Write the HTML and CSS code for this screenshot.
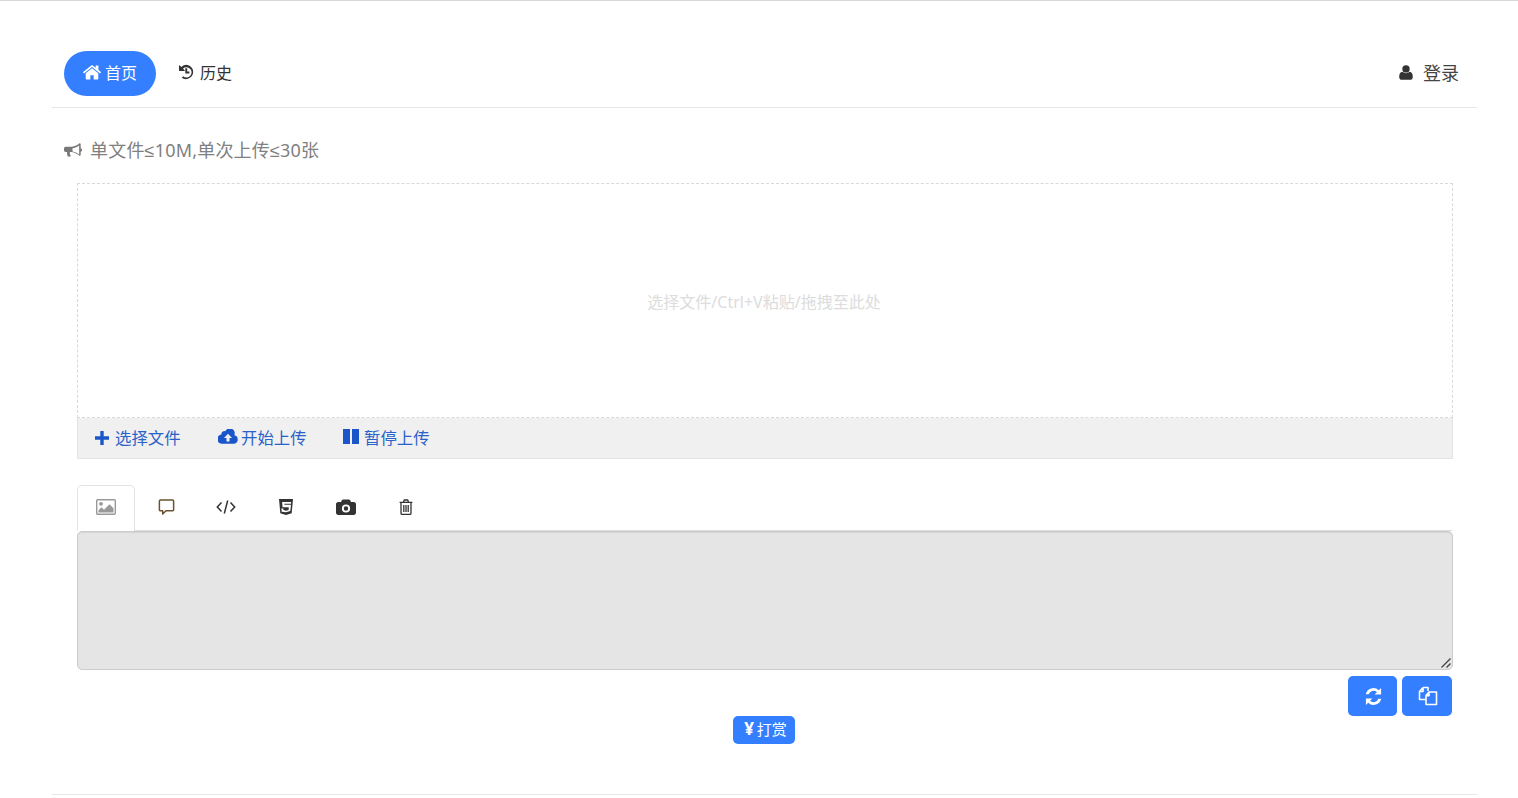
FILE: index.html
```html
<!DOCTYPE html>
<html lang="zh-CN">
<head>
<meta charset="utf-8">
<title>图床</title>
<link rel="stylesheet" href="styles.css">
</head>
<body>
<div class="page">
  <nav class="nav">
    <a class="pill active">
      <svg class="ic-home" viewBox="0 0 24 20"><path d="M12 4.200 3.600 11.100V18.300c0 .5.400.9.900.9h5.300v-5.600h4.400v5.600h5.300c.5 0 .9-.4.9-.9v-7.200zM23.800 9.400 20.600 6.700V1.200c0-.3-.2-.5-.5-.5h-2.700c-.3 0-.5.200-.5.500v2.600L13.400.9c-.8-.7-2-.7-2.800 0L.2 9.400c-.2.200-.3.500-.1.700l.9 1c.2.200.5.200.7 0L12 2.500l10.300 8.600c.2.200.5.200.7 0l.9-1c.2-.2.100-.5-.1-.7z" fill="#fff"/></svg>
      <span>首页</span>
    </a>
    <a class="pill">
      <svg class="ic-hist" viewBox="0 0 16 16"><path d="M8.500.8A7.200 7.200 0 0 0 3.400 2.900L1.800 1.400a.5.5 0 0 0-.8.300V6.500c0 .3.200.5.500.5H6.300a.5.5 0 0 0 .3-.8L5 4.600a5.100 5.100 0 1 1 .2 7.600l-1.500 1.600A7.200 7.200 0 1 0 8.500.8zM7.300 4.300v5.100h4.100V7.600H9.200V4.300z" fill="#333"/></svg>
      <span>历史</span>
    </a>
    <a class="login">
      <svg class="ic-user" viewBox="0 0 14 15"><path d="M7 .2a3.700 3.700 0 1 1 0 7.400A3.700 3.700 0 0 1 7 .2zM3.300 6.800C4.300 7.700 5.600 8.200 7 8.200s2.700-.5 3.700-1.400c2 .3 3.100 2 3.100 5.100 0 1.500-1 2.900-2.400 2.900H2.600C1.200 14.800.2 13.400.2 11.900c0-3.100 1.100-4.800 3.100-5.100z" fill="#333"/></svg>
      <span>登录</span>
    </a>
  </nav>

  <p class="notice">
    <svg class="ic-horn" viewBox="0 0 19 16"><path d="M16.400.8c.7 0 1.200.5 1.200 1.200v4.100c.8.200 1.400.9 1.400 1.900s-.6 1.700-1.400 1.900v3c0 .7-.5 1.200-1.200 1.200-2-1.700-5-3.700-8.300-4H6.300c-.4 1-.3 1.900.1 2.800.3.600.8 1.100 1 1.900H3.900C3.500 13.200 2.900 10.800 3.300 10H1.700C.8 10 0 9.200 0 8.300V6.300C0 5.300.8 4.500 1.700 4.500h6.600c3.100-.2 6.100-2 8.100-3.700zM16 3.200c-1.900 1.400-4.500 2.700-7 3v3.400c2.500.3 5.100 1.600 7 3.100z" fill="#777"/></svg>
    <span>单文件≤10M,单次上传≤30张</span>
  </p>

  <section class="uploader">
    <div class="drop">选择文件/Ctrl+V粘贴/拖拽至此处</div>
    <div class="tools">
      <a class="tool t1">
        <svg class="ic-plus" viewBox="0 0 14 14"><path d="M5.300 0h3.400v5.300H14v3.400H8.700V14H5.300V8.700H0V5.300h5.300z" fill="#1a56c9"/></svg>
        <span>选择文件</span>
      </a>
      <a class="tool t2">
        <svg class="ic-cloud" viewBox="0 0 20 15"><path d="M16.300 6.300A4.700 4.700 0 0 0 7.300 2.200 3 3 0 0 0 3.400 5.400 4.700 4.700 0 0 0 4.500 14.800h11.200a4.300 4.300 0 0 0 .6-8.500zM11.500 9v3.500h-3V9H6l4-4.200L14 9z" fill="#1a56c9"/></svg>
        <span>开始上传</span>
      </a>
      <a class="tool t3">
        <svg class="ic-pause" viewBox="0 0 16 15"><path d="M0 0h7v15H0zM9 0h7v15H9z" fill="#1a56c9"/></svg>
        <span>暂停上传</span>
      </a>
    </div>
  </section>

  <div class="tabs">
    <a class="tab active">
      <svg class="ic-pic" viewBox="0 0 20 16"><rect x=".7" y=".7" width="18.600" height="14.600" rx="1" fill="none" stroke="#999" stroke-width="1.400"/><circle cx="5" cy="4.800" r="1.900" fill="#999"/><path d="M2.500 13.500v-2.200l3-3 2.500 2.500 5.500-5.500 4 4v4.200z" fill="#999"/></svg>
    </a>
    <a class="tab">
      <svg class="ic-cmt" viewBox="0 0 16 16"><path d="M2.300 1h11.400c.6 0 1 .4 1 1v8c0 .6-.4 1-1 1H7.500l-3.100 3.200V11H2.300c-.6 0-1-.4-1-1V2c0-.6.4-1 1-1z" fill="none" stroke="#6a5230" stroke-width="1.400" stroke-linejoin="round"/></svg>
    </a>
    <a class="tab">
      <svg class="ic-code" viewBox="0 0 20 14"><path d="M5.500 2.500 1.300 7l4.200 4.500M14.500 2.500 18.700 7l-4.200 4.500M11.700 .5 8.300 13.500" fill="none" stroke="#333" stroke-width="1.500"/></svg>
    </a>
    <a class="tab">
      <svg class="ic-h5" viewBox="0 0 14 16"><path fill-rule="evenodd" d="M0 0h14l-1.300 14.300L7 16l-5.700-1.700zM3.100 3l.5 5.300h6.200l-.2 2.700-2.600.7-2.600-.7-.1-1.500H2.400l.3 3.200L7 13.300l4.300-1.300.7-6.200H5.500l-.1-1H12l.1-1.800z" fill="#333"/></svg>
    </a>
    <a class="tab">
      <svg class="ic-cam" viewBox="0 0 20 16"><path fill-rule="evenodd" d="M7 .5h6c.6 0 1 .3 1.200.8L15 3h2.800C19 3 20 4 20 5.200v8.600c0 1.200-1 2.200-2.200 2.200H2.200C1 16 0 15 0 13.800V5.200C0 4 1 3 2.200 3H5l.8-1.700C6 .8 6.400.5 7 .5zM10 5.400a4.100 4.100 0 1 0 0 8.200 4.100 4.100 0 0 0 0-8.200zm0 1.900a2.200 2.200 0 1 1 0 4.400 2.200 2.200 0 0 1 0-4.400z" fill="#333"/></svg>
    </a>
    <a class="tab">
      <svg class="ic-trash" viewBox="0 0 14 16"><path d="M.6 3.400h12.800M4.500 3.200 5.300 1h3.400l.8 2.200M2 3.400v10.800c0 .7.500 1.200 1.100 1.200h7.800c.6 0 1.100-.5 1.100-1.200V3.400M4.800 6v7M7 6v7M9.200 6v7" fill="none" stroke="#333" stroke-width="1.300"/></svg>
    </a>
  </div>

  <div class="output-wrap">
    <textarea class="output" readonly></textarea>
    <svg class="grip" viewBox="0 0 12 12"><path d="M1.500 10.500 10.500 1.500M6.500 10.500 10.500 6.500" fill="none" stroke="#444" stroke-width="1.400"/></svg>
  </div>

  <div class="actions">
    <button class="act" type="button">
      <svg class="ic-ref" viewBox="0 0 18 18"><path d="M16.200 1v6.200H10l2.300-2.300A4.900 4.900 0 0 0 4.400 6.800H1.700A7.400 7.400 0 0 1 14 3zM1.800 17v-6.200H8l-2.300 2.300a4.900 4.900 0 0 0 7.900-1.900h2.700A7.400 7.400 0 0 1 4 15z" fill="#fff"/></svg>
    </button>
    <button class="act wide" type="button">
      <svg class="ic-copy" viewBox="0 0 20 20"><path d="M5 1.500 1.500 5.500v8h6M5 1.500h5V5M1.800 5.500H5V1.800" fill="none" stroke="#fff" stroke-width="1.600" stroke-linejoin="round"/><path d="M11 6h7.500v12.500h-10.500V9.500zM11 6.300V9.800H8.300" fill="none" stroke="#fff" stroke-width="1.600" stroke-linejoin="round"/></svg>
    </button>
  </div>

  <div class="donate-row"><a class="donate"><b class="yen">¥</b><span>打赏</span></a></div>

  <div class="foot"></div>
</div>
</body>
</html>
```

FILE: styles.css
```css
* { box-sizing: border-box; }
html, body { margin: 0; padding: 0; }
body {
  font-family: "Noto Sans", "Liberation Sans", "Noto Sans CJK SC", sans-serif;
  color: #333;
  background: #fff;
  border-top: 1px solid #d8d8d8;
  overflow: hidden;
  height: 798px;
}
svg { display: block; flex: none; }
.page { margin-left: 52px; width: 1425px; padding-top: 50px; }

.nav {
  display: flex;
  align-items: center;
  height: 57px;
  padding: 0 18px 12px 12px;
  border-bottom: 1px solid #e7e7e7;
}
.pill {
  display: flex;
  align-items: center;
  gap: 4px;
  height: 45px;
  padding: 0 15px;
  font-size: 16px;
  color: #333;
  border-radius: 23px;
}
.pill span { margin-top: -3px; }
.pill.active { width: 92px; padding: 0 0 0 19px; color: #fff; background: #337fff; margin-right: 7px; }
.pill:not(.active) { gap: 6px; }
.ic-home { width: 18px; height: 15px; margin-top: -2px; }
.ic-hist { width: 16px; height: 16px; margin-top: -2px; }
.login { margin-left: auto; display: flex; align-items: center; gap: 10px; font-size: 18px; color: #444; }
.login span { margin-top: -3px; }
.ic-user { width: 14px; height: 15px; margin-top: -2px; }

.notice {
  display: flex;
  align-items: center;
  gap: 8px;
  margin: 30px 0 0 12px;
  height: 24px;
  font-size: 18px;
  letter-spacing: .2px;
  color: #808080;
}
.notice span { margin-top: -2px; }
.ic-horn { width: 18px; height: 16px; }

.uploader { margin: 21px 24px 0 25px; }
.drop {
  display: flex;
  align-items: center;
  justify-content: center;
  height: 235px;
  padding: 1px 2px 0 0;
  font-size: 16px;
  color: #dcdcdc;
  border: 1px dashed #d9d9d9;
}
.tools {
  display: flex;
  align-items: center;
  height: 41px;
  padding: 0 0 1px 17px;
  background: #f0f0f0;
  border: 1px solid #e3e3e3;
  border-top: 0;
  font-size: 16.4px;
  color: #2a62c9;
}
.tool { display: flex; align-items: center; gap: 6px; }
.tool span { margin-top: -1px; }
.t1 { width: 123px; }
.t2 { width: 125px; gap: 3px; }
.t3 { gap: 5px; }
.ic-plus { width: 14px; height: 14px; }
.ic-cloud { width: 20px; height: 15px; margin-top: -2px; }
.ic-pause { width: 16px; height: 15px; margin-top: -2px; }

.tabs { display: flex; margin: 26px 25px 0; height: 46px; border-bottom: 1px solid #ddd; }
.tab {
  display: flex;
  align-items: center;
  justify-content: center;
  width: 60px;
  height: 46px;
  padding: 0 2px 2px 0;
}
.tab.active {
  width: 58px;
  margin-right: 2px;
  padding: 0 0 3px;
  background: #fff;
  border: 1px solid #e3e3e3;
  border-bottom: 0;
  border-radius: 5px 5px 0 0;
}
.ic-pic { width: 20px; height: 16px; }
.ic-cmt { width: 17px; height: 17px; }
.ic-code { width: 20px; height: 14px; }
.ic-h5 { width: 14px; height: 16px; }
.ic-cam { width: 20px; height: 16px; }
.ic-trash { width: 14px; height: 16px; }

.output-wrap { position: relative; margin: 0 24px 0 25px; height: 139px; }
.output {
  display: block;
  width: 100%;
  height: 139px;
  padding: 6px;
  background: #e5e5e5;
  border: 1px solid #ccc;
  border-radius: 5px;
  box-shadow: inset 0 1px 1px rgba(0, 0, 0, .075);
  outline: 0;
  resize: none;
}
.grip { position: absolute; right: 1px; bottom: 1px; width: 12px; height: 12px; }

.actions { display: flex; justify-content: flex-end; gap: 5px; margin: 6px 25px 0 0; }
.act {
  display: flex;
  align-items: center;
  justify-content: center;
  width: 49px;
  height: 40px;
  padding: 0;
  background: #337fff;
  border: 0;
  border-radius: 5px;
}
.act.wide { width: 50px; padding-left: 1px; }
.ic-ref { width: 19px; height: 19px; margin-left: 2px; }
.ic-copy { width: 20px; height: 20px; }

.donate-row { display: flex; justify-content: center; margin-right: 1px; }
.donate {
  display: flex;
  align-items: center;
  justify-content: center;
  width: 62px;
  height: 28px;
  padding-left: 3px;
  font-size: 15px;
  color: #fff;
  background: #337fff;
  border-radius: 5px;
}
.donate span { margin-top: -3px; }
.yen { margin-right: 3px; font-size: 17px; margin-top: -3px; }

.foot { margin-top: 50px; border-top: 1px solid #e7e7e7; }
```
